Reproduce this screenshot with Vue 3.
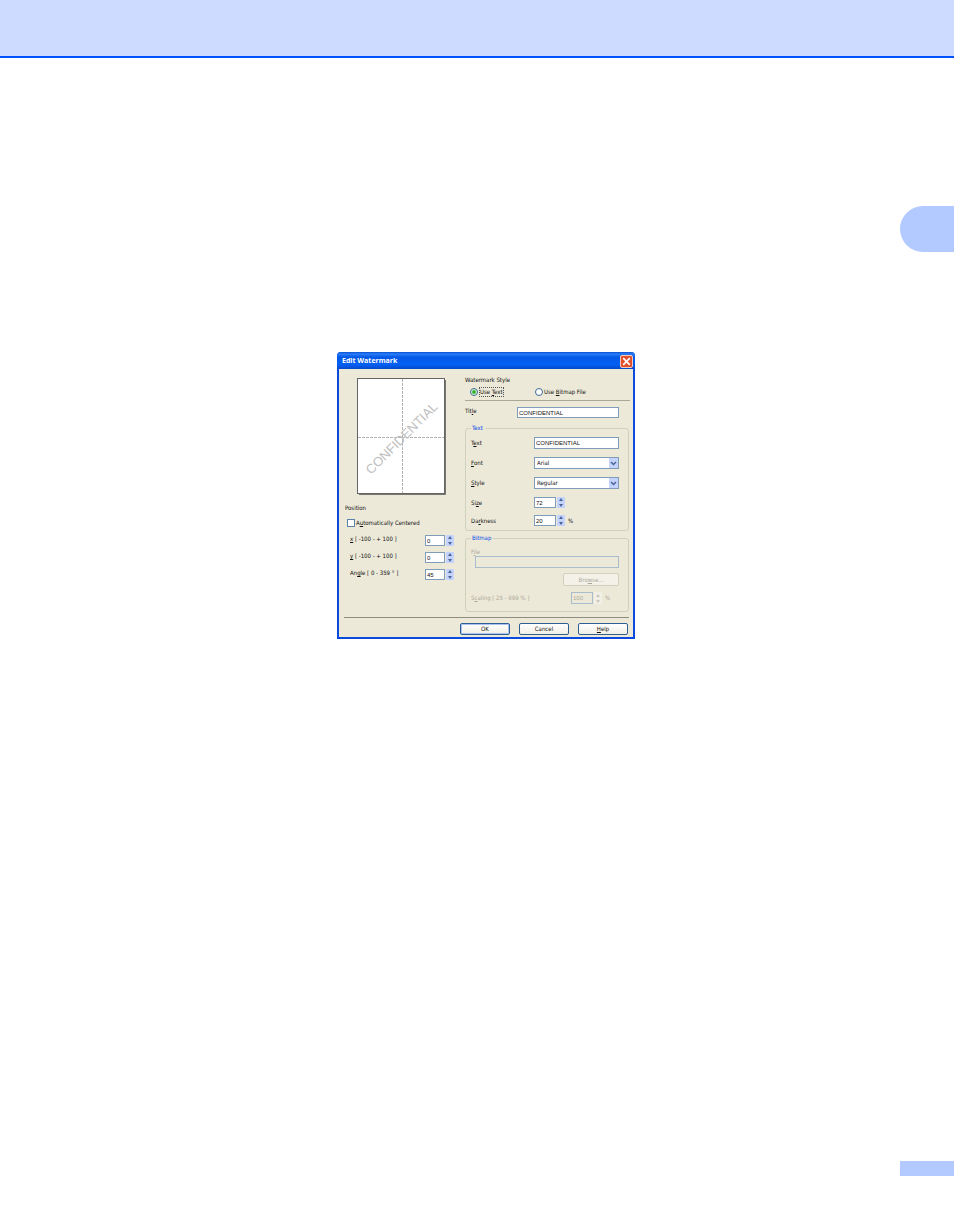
<script setup>
import { ref } from 'vue'

const mode = ref('text')
const title = ref('CONFIDENTIAL')
const text = ref('CONFIDENTIAL')
const font = ref('Arial')
const fontStyle = ref('Regular')
const size = ref(72)
const darkness = ref(20)
const centered = ref(false)
const x = ref(0)
const y = ref(0)
const angle = ref(45)
const scaling = ref(100)
</script>

<template>
  <div class="page">
    <header class="band"></header>
    <div class="tab"></div>

    <main>
      <form class="dialog" @submit.prevent>
        <div class="titlebar">
          <h1>Edit Watermark</h1>
          <button type="button" class="close" aria-label="Close">
            <svg viewBox="0 0 10 10"><path d="M2 2L8 8M8 2L2 8" stroke="#fff" stroke-width="1.5" /></svg>
          </button>
        </div>

        <div class="columns">
          <div class="left">
            <svg class="preview" viewBox="0 0 90 118">
              <path d="M2 116.5H88.5V2" fill="none" stroke="#77776f" />
              <rect x="0.5" y="0.5" width="87" height="115" fill="#fff" stroke="#666" />
              <path d="M45.5 1V115M1 59.5H87" stroke="#b4b4b4" stroke-dasharray="3 1" />
              <text x="14" y="97" transform="rotate(-45 14 97)">CONFIDENTIAL</text>
            </svg>
            <p class="position">Position</p>
            <label class="check"><input v-model="centered" type="checkbox"><span>A<u>u</u>tomatically Centered</span></label>
            <div class="coord">
              <label for="x"><u>x</u> [ -100 - + 100 ]</label>
              <input id="x" v-model="x" type="number">
              <span class="spin">
                <button type="button" aria-label="Increase x" @click="x++"><svg viewBox="0 0 8 5"><path d="M2 4L4 1L6 4Z" /></svg></button>
                <button type="button" aria-label="Decrease x" @click="x--"><svg viewBox="0 0 8 5"><path d="M2 1L4 4L6 1Z" /></svg></button>
              </span>
            </div>
            <div class="coord">
              <label for="y"><u>y</u> [ -100 - + 100 ]</label>
              <input id="y" v-model="y" type="number">
              <span class="spin">
                <button type="button" aria-label="Increase y" @click="y++"><svg viewBox="0 0 8 5"><path d="M2 4L4 1L6 4Z" /></svg></button>
                <button type="button" aria-label="Decrease y" @click="y--"><svg viewBox="0 0 8 5"><path d="M2 1L4 4L6 1Z" /></svg></button>
              </span>
            </div>
            <div class="coord">
              <label for="angle">An<u>g</u>le [ 0 - 359 ° ]</label>
              <input id="angle" v-model="angle" type="number">
              <span class="spin">
                <button type="button" aria-label="Increase angle" @click="angle++"><svg viewBox="0 0 8 5"><path d="M2 4L4 1L6 4Z" /></svg></button>
                <button type="button" aria-label="Decrease angle" @click="angle--"><svg viewBox="0 0 8 5"><path d="M2 1L4 4L6 1Z" /></svg></button>
              </span>
            </div>
          </div>

          <div class="right">
            <p>Watermark Style</p>
            <div class="radios">
              <label><input v-model="mode" type="radio" name="mode" value="text"><span class="focused">Use <u>T</u>ext</span></label>
              <label><input v-model="mode" type="radio" name="mode" value="bitmap"><span>Use <u>B</u>itmap File</span></label>
            </div>
            <hr>
            <div class="title-row">
              <label for="title">Tit<u>l</u>e</label>
              <input id="title" v-model="title" type="text">
            </div>

            <fieldset class="text-group">
              <legend>Text</legend>
              <div class="row">
                <label for="text">T<u>e</u>xt</label>
                <input id="text" v-model="text" type="text">
              </div>
              <div class="row">
                <label for="font"><u>F</u>ont</label>
                <span class="select">
                  <select id="font" v-model="font"><option>Arial</option></select>
                  <svg viewBox="0 0 9 10"><path d="M2 4L4.5 6.5L7 4" /></svg>
                </span>
              </div>
              <div class="row">
                <label for="style"><u>S</u>tyle</label>
                <span class="select">
                  <select id="style" v-model="fontStyle"><option>Regular</option></select>
                  <svg viewBox="0 0 9 10"><path d="M2 4L4.5 6.5L7 4" /></svg>
                </span>
              </div>
              <div class="row size">
                <label for="size">Si<u>z</u>e</label>
                <input id="size" v-model="size" type="number">
                <span class="spin">
                  <button type="button" aria-label="Increase size" @click="size++"><svg viewBox="0 0 8 5"><path d="M2 4L4 1L6 4Z" /></svg></button>
                  <button type="button" aria-label="Decrease size" @click="size--"><svg viewBox="0 0 8 5"><path d="M2 1L4 4L6 1Z" /></svg></button>
                </span>
              </div>
              <div class="row darkness">
                <label for="darkness">Da<u>r</u>kness</label>
                <input id="darkness" v-model="darkness" type="number">
                <span class="spin">
                  <button type="button" aria-label="Increase darkness" @click="darkness++"><svg viewBox="0 0 8 5"><path d="M2 4L4 1L6 4Z" /></svg></button>
                  <button type="button" aria-label="Decrease darkness" @click="darkness--"><svg viewBox="0 0 8 5"><path d="M2 1L4 4L6 1Z" /></svg></button>
                </span>
                <span class="unit">%</span>
              </div>
            </fieldset>

            <fieldset class="bitmap-group">
              <legend>Bitmap</legend>
              <label class="file-label" for="file">F<u>i</u>le</label>
              <input id="file" class="file" type="text" disabled>
              <button type="button" class="browse" disabled>Bro<u>w</u>se...</button>
              <div class="scaling">
                <label for="scaling">S<u>c</u>aling [ 25 - 999 % ]</label>
                <input id="scaling" v-model="scaling" type="number" disabled>
                <span class="spin">
                  <button type="button" aria-label="Increase scaling" disabled><svg viewBox="0 0 8 5"><path d="M2 4L4 1L6 4Z" /></svg></button>
                  <button type="button" aria-label="Decrease scaling" disabled><svg viewBox="0 0 8 5"><path d="M2 1L4 4L6 1Z" /></svg></button>
                </span>
                <span class="unit">%</span>
              </div>
            </fieldset>
          </div>
        </div>

        <div class="actions">
          <button type="submit" class="default">OK</button>
          <button type="button">Cancel</button>
          <button type="button"><u>H</u>elp</button>
        </div>
      </form>
    </main>

    <footer></footer>
  </div>
</template>

<style>
body {
  margin: 0;
  background: #fff;
}
</style>

<style scoped>
* {
  box-sizing: border-box;
}

.page {
  display: flex;
  flex-direction: column;
  font-family: "DejaVu Sans Condensed", "Liberation Sans", sans-serif;
  font-size: 6px;
  line-height: 10px;
  color: #111;
}

.band {
  height: 58px;
  background: #ccdbff;
  border-bottom: 2px solid #0052ff;
}

.tab {
  align-self: flex-end;
  width: 54px;
  height: 46px;
  margin-top: 148px;
  background: #b2caff;
  border-radius: 23px 0 0 23px;
}

main {
  display: flex;
  justify-content: center;
  margin-top: 100px;
  padding-left: 18px;
}

footer {
  align-self: flex-end;
  width: 54px;
  height: 15px;
  margin-top: 522px;
  background: #b2caff;
}

.dialog {
  width: 298px;
  background: #ece9d8;
  border: solid #0b4ade;
  border-width: 0 2px 2px;
  border-radius: 4px 4px 0 0;
}

.titlebar {
  display: flex;
  align-items: center;
  justify-content: space-between;
  height: 17px;
  margin: 0 -2px;
  padding: 1px 2px 0 5px;
  border-radius: 4px 4px 0 0;
  background: linear-gradient(#0a4fd0, #2a7df8 12%, #0458e6 30%, #0460f4 75%, #0448c8);
}

h1 {
  margin: 0;
  font: bold 7px/12px "Open Sans", sans-serif;
  color: #fff;
}

p {
  margin: 0;
}

button,
input,
select {
  font: inherit;
  color: inherit;
  margin: 0;
  padding: 0;
}

.close {
  width: 13px;
  height: 13px;
  border: 1px solid #f3c9bd;
  border-radius: 2px;
  background: #e0502c;
}

svg {
  display: block;
}

.columns {
  display: grid;
  grid-template-columns: 126px 1fr;
}

.left {
  padding: 9px 0 0 6px;
}

.right {
  padding: 6px 3px 0 0;
}

.preview {
  width: 90px;
  height: 118px;
  margin-left: 12px;
}

.preview text {
  font: 13px "Liberation Sans", sans-serif;
  fill: #c0c0c0;
}

.position {
  margin-top: 7px;
}

.check {
  display: flex;
  align-items: center;
  gap: 1px;
  height: 10px;
  margin: 5px 0 7px 2px;
}

input[type="checkbox"] {
  appearance: none;
  width: 8px;
  height: 8px;
  border: 1px solid #5b83a8;
  background: #fff;
}

.coord {
  display: flex;
  height: 11px;
  margin-bottom: 6px;
}

.coord label {
  width: 80px;
  padding-left: 5px;
  line-height: 8px;
}

.coord input {
  width: 20px;
}

input[type="text"],
input[type="number"],
select {
  appearance: none;
  border: 1px solid #7f9db9;
  border-radius: 0;
  background: #fff;
  padding-left: 1px;
  height: 100%;
  min-width: 0;
}

/* edit boxes use the wider face */
input[type="text"],
input[type="number"] {
  font-family: "Liberation Sans", sans-serif;
}

input::-webkit-inner-spin-button {
  display: none;
}

.spin {
  display: flex;
  flex-direction: column;
  width: 8px;
  margin-left: 1px;
}

.spin button {
  flex: 1;
  min-height: 0;
  border: 0;
  border-radius: 1px;
  background: #c3d3fd;
}

.spin svg {
  width: 8px;
  height: 5px;
  fill: #4d6596;
}

.radios {
  display: flex;
  height: 10px;
  margin-top: 2px;
  padding-left: 5px;
}

.radios label {
  display: flex;
  align-items: center;
  gap: 1px;
  width: 65px;
  white-space: nowrap;
}

input[type="radio"] {
  appearance: none;
  flex: none;
  width: 8px;
  height: 8px;
  border: 1px solid #3d6a94;
  border-radius: 50%;
  background: #fff;
}

input[type="radio"]:checked {
  background: radial-gradient(circle, #21b121 0 1px, #fff 3px);
}

.focused {
  outline: 1px dotted #555;
  outline-offset: -1px;
  padding: 0 1px;
}

hr {
  height: 1px;
  margin: 3px 0 6px;
  border: 0;
  background: #aca899;
}

.title-row {
  display: flex;
  height: 11px;
}

.title-row label {
  width: 52px;
  line-height: 8px;
}

.title-row input {
  width: 102px;
}

fieldset {
  min-width: 0;
  width: 164px;
  margin: 6px 0 0;
  padding: 5px 8px 3px 5px;
  border: 1px solid #d0d0bf;
  border-radius: 3px;
}

legend {
  height: 8px;
  padding: 0 2px 0 1px;
  line-height: 8px;
  color: #0046e5;
}

.row {
  display: flex;
  height: 12px;
  margin-bottom: 8px;
}

.row.size {
  height: 11px;
  margin-bottom: 7px;
}

.row.darkness {
  height: 11px;
  margin-bottom: 1px;
}

.row label {
  width: 63px;
  line-height: 12px;
}

.row input[type="text"] {
  width: 85px;
}

.row input[type="number"] {
  width: 22px;
}

.select {
  position: relative;
  width: 85px;
}

select {
  display: block;
  width: 100%;
  padding-left: 2px;
}

.select svg {
  position: absolute;
  top: 1px;
  right: 1px;
  width: 9px;
  height: 10px;
  background: #c3d3fd;
  fill: none;
  stroke: #4d6596;
  stroke-width: 1.5;
  pointer-events: none;
}

.unit {
  margin-left: 3px;
  line-height: 12px;
}

.bitmap-group {
  margin-top: 3px;
  padding-bottom: 7px;
  color: #aca899;
}

.file-label {
  display: block;
  line-height: 9px;
}

.bitmap-group input {
  border-color: #a9bccb;
  background: #ece9d8;
}

.bitmap-group .file {
  display: block;
  width: 144px;
  height: 12px;
  margin-left: 4px;
}

.browse {
  display: block;
  width: 56px;
  height: 13px;
  margin: 5px 1px 6px auto;
  border: 1px solid #d2cfbd;
  border-radius: 2px;
  background: #f4f2e8;
}

.scaling {
  display: flex;
  height: 12px;
}

.scaling label {
  width: 100px;
  line-height: 12px;
}

.scaling input {
  width: 22px;
}

.bitmap-group .spin button {
  background: #f2f0e6;
}

.bitmap-group .spin svg {
  fill: #c8c6b8;
}

.actions {
  display: flex;
  justify-content: flex-end;
  gap: 9px;
  margin: 5px 4px 0 5px;
  padding: 5px 1px 2px 0;
  border-top: 1px solid #8f8c7e;
}

.actions button {
  width: 50px;
  height: 12px;
  border: 1px solid #2f5f92;
  border-radius: 2px;
  background: linear-gradient(#fff, #f0efe6);
  line-height: 10px;
}

.actions .default {
  box-shadow: inset 0 0 0 1px #a9c4ef;
}
</style>
